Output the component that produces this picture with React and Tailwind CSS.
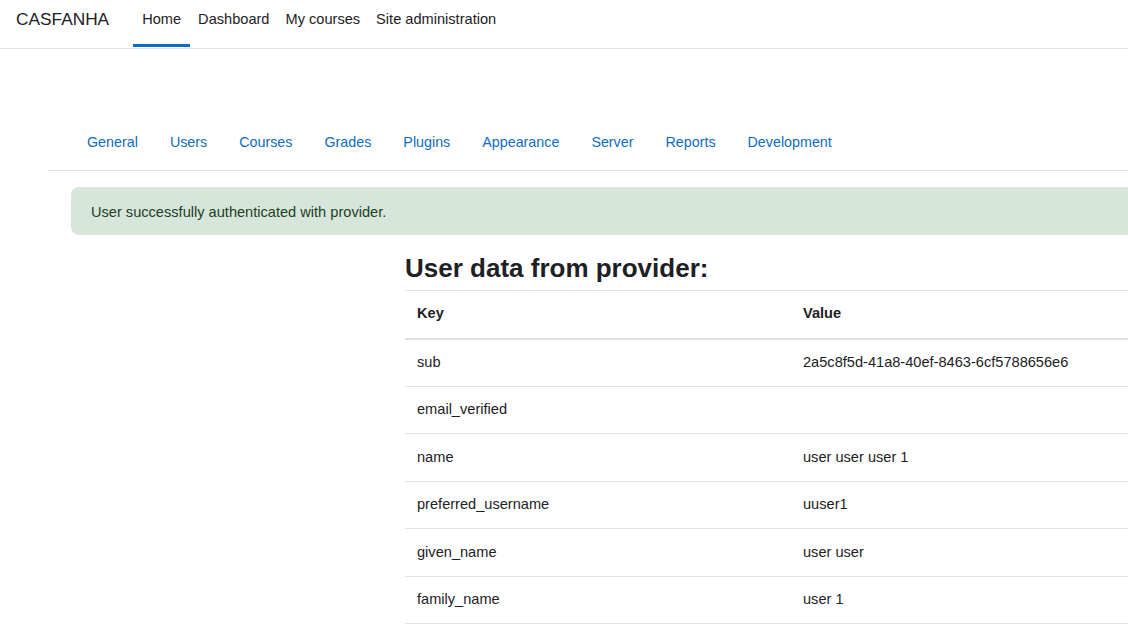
export default function App() {
  const rows = [
    ["sub", "2a5c8f5d-41a8-40ef-8463-6cf5788656e6"],
    ["email_verified", ""],
    ["name", "user user user 1"],
    ["preferred_username", "uuser1"],
    ["given_name", "user user"],
    ["family_name", "user 1"],
  ];
  const tabs = ["General", "Users", "Courses", "Grades", "Plugins", "Appearance", "Server", "Reports", "Development"];
  return (
    <div className="w-[1128px] h-[634px] overflow-hidden bg-white text-[#1d2125]" style={{ fontFamily: '"Liberation Sans", Arial, sans-serif' }}>
      <nav className="h-[49px] border-b border-[#dee2e6] flex items-stretch pl-4">
        <div className="text-[17.3px] flex items-center pb-[8px] mr-6 text-[#1d2125]">CASFANHA</div>
        <div className="flex items-stretch text-[14.6px]">
          <div className="relative px-[9px] flex items-center pb-[8px]">
            Home
            <div className="absolute left-0 right-0 bottom-[1px] h-[3px] bg-[#0f6cbf]"></div>
          </div>
          <div className="px-2 flex items-center pb-[8px]">Dashboard</div>
          <div className="px-2 flex items-center pb-[8px]">My courses</div>
          <div className="px-2 flex items-center pb-[8px]">Site administration</div>
        </div>
      </nav>
      <div className="pl-12 pt-[71px] w-[1200px]">
        <div className="flex border-b border-[#dee2e6] pl-[23px] h-[51px] items-center text-[14.3px] text-[#0f6cbf] pb-[4px]">
          {tabs.map((t) => (
            <div key={t} className="px-4">{t}</div>
          ))}
        </div>
        <div className="ml-[23px] mt-4 h-[48px] rounded-lg bg-[#d7e6da] text-[#1c3f26] text-[14.6px] flex items-center pl-5 pt-[3px] w-[1200px]">
          User successfully authenticated with provider.
        </div>
        <div className="ml-[357px] w-[800px]">
          <h3 className="text-[26px] font-bold mt-[17px] leading-[32px] pb-[6px] text-[#1d2125]">User data from provider:</h3>
          <table className="w-[800px] text-[14.6px] border-collapse">
            <thead>
              <tr className="border-t border-[#dee2e6] border-b-2 border-b-[#dee2e6]">
                <th className="text-left font-bold px-3 h-[48px] w-[386px]">Key</th>
                <th className="text-left font-bold px-3 h-[48px]">Value</th>
              </tr>
            </thead>
            <tbody>
              {rows.map(([k, v]) => (
                <tr key={k} className="border-b border-[#dee2e6]">
                  <td className="px-3 h-[47.5px] pt-[1px]">{k}</td>
                  <td className="px-3 h-[47.5px] pt-[1px]">{v}</td>
                </tr>
              ))}
            </tbody>
          </table>
        </div>
      </div>
    </div>
  );
}
